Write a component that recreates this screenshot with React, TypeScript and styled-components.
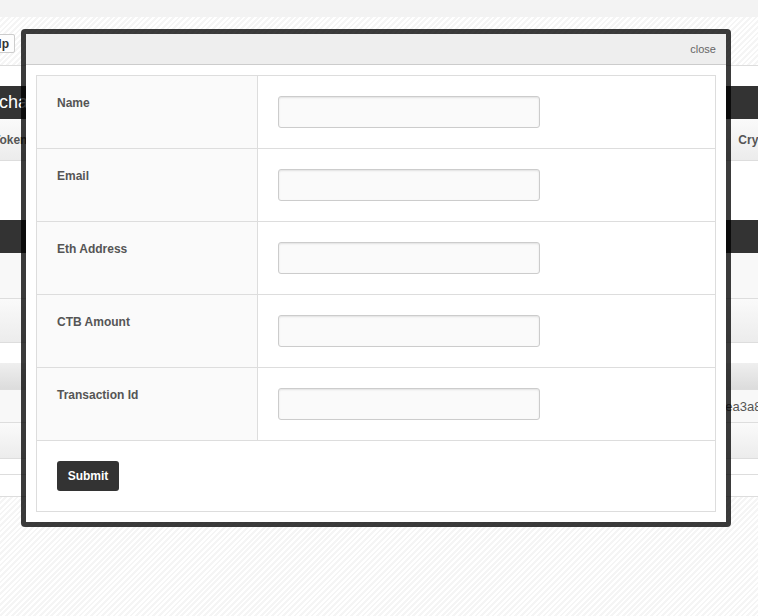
import { FC } from "react";
import styled, { createGlobalStyle, css } from "styled-components";

const hatch = css`
  background-color: #fcfcfc;
  background-image: repeating-linear-gradient(
    -45deg,
    #ffffff 0,
    #ffffff 2px,
    #f5f5f5 2px,
    #f5f5f5 4px
  );
`;

const GlobalStyle = createGlobalStyle`
  html, body {
    margin: 0;
    overflow: hidden;
  }
  body {
    font-family: "Liberation Sans", Arial, sans-serif;
    ${hatch}
  }
`;

const fields = ["Name", "Email", "Eth Address", "CTB Amount", "Transaction Id"];

const App: FC = () => {
  return (
    <>
      <GlobalStyle />
      <Page>
        <TopStrip />
        <Toolbar>
          <ToolButton>Help</ToolButton>
        </Toolbar>
        <Content>
          <SectionBar>Purchase CTB</SectionBar>
          <Row variant="gradient" height={42}>
            <HeadCell shift={-7}>Token</HeadCell>
            <HeadCell shift={0} trail={-19}>
              Crypto
            </HeadCell>
          </Row>
          <Gap height={59} />
          <SectionBar />
          <Row variant="light" height={46} />
          <Row variant="gradient" height={44} />
          <Gap height={20} />
          <Row variant="head" height={27} />
          <Row variant="light" height={33}>
            <span />
            <HashCell>ea3a8c9f2</HashCell>
          </Row>
          <Row variant="gradient" height={36} />
          <Row variant="white" height={16} />
          <Row variant="white" height={22} />
        </Content>
      </Page>

      <Modal>
        <ModalHeader>
          <CloseLink>close</CloseLink>
        </ModalHeader>
        <ModalBody>
          <FormTable>
            {fields.map((label) => (
              <FormRow key={label}>
                <LabelCell>{label}</LabelCell>
                <InputCell>
                  <TextInput type="text" />
                </InputCell>
              </FormRow>
            ))}
            <SubmitRow>
              <SubmitButton type="button">Submit</SubmitButton>
            </SubmitRow>
          </FormTable>
        </ModalBody>
      </Modal>
    </>
  );
};

export default App;

const Page = styled.div`
  width: 100%;
  overflow: hidden;
`;

const TopStrip = styled.div`
  height: 17px;
  background: #f3f3f3;
`;

const Toolbar = styled.div`
  height: 48px;
  padding-top: 17px;
  box-sizing: border-box;
  ${hatch}
`;

const ToolButton = styled.button`
  display: block;
  height: 19px;
  margin-left: -23px;
  padding: 0 5px;
  border: 1px solid #cccccc;
  border-radius: 2px;
  background: #fdfdfd;
  color: #333333;
  font: bold 12px "Liberation Sans", Arial, sans-serif;
`;

const Content = styled.div`
  background: #ffffff;
  border-top: 1px solid #dddddd;
  padding-top: 20px;
`;

const SectionBar = styled.div`
  height: 33px;
  line-height: 33px;
  background: #333333;
  color: #ffffff;
  font-size: 18px;
  text-indent: -29px;
  white-space: nowrap;
`;

const rowBackgrounds = {
  gradient: "linear-gradient(#fafafa, #ececec)",
  light: "#f8f8f8",
  head: "linear-gradient(#efefef, #dcdcdc)",
  white: "#ffffff",
};

const Row = styled.div<{
  variant: keyof typeof rowBackgrounds;
  height: number;
}>`
  display: flex;
  justify-content: space-between;
  align-items: center;
  box-sizing: border-box;
  height: ${(p) => p.height}px;
  background: ${(p) => rowBackgrounds[p.variant]};
  border-bottom: 1px solid #dddddd;
  white-space: nowrap;
`;

const Gap = styled.div<{ height: number }>`
  height: ${(p) => p.height}px;
`;

const HeadCell = styled.span<{ shift: number; trail?: number }>`
  margin-left: ${(p) => p.shift}px;
  margin-right: ${(p) => p.trail ?? 0}px;
  color: #555555;
  font-size: 12px;
  font-weight: bold;
`;

const HashCell = styled.span`
  margin-right: -28px;
  color: #555555;
  font-size: 13px;
`;

const Modal = styled.div`
  position: absolute;
  top: 29px;
  left: 21px;
  width: 710px;
  box-sizing: border-box;
  border: 5px solid rgba(0, 0, 0, 0.77);
  border-radius: 4px;
  background: #ffffff;
  background-clip: padding-box;
`;

const ModalHeader = styled.div`
  display: flex;
  justify-content: flex-end;
  align-items: center;
  height: 30px;
  padding-right: 10px;
  background: #eeeeee;
  border-bottom: 1px solid #cccccc;
`;

const CloseLink = styled.a`
  color: #666666;
  font-size: 11px;
  cursor: pointer;
`;

const ModalBody = styled.div`
  padding: 10px;
`;

const FormTable = styled.div`
  border: 1px solid #dddddd;
`;

const FormRow = styled.div`
  display: grid;
  grid-template-columns: 221px 1fr;
  border-bottom: 1px solid #dddddd;
`;

const LabelCell = styled.div`
  padding: 20px 20px 0;
  background: #fafafa;
  border-right: 1px solid #dddddd;
  color: #555555;
  font-size: 12px;
  font-weight: bold;
`;

const InputCell = styled.div`
  padding: 20px;
`;

const TextInput = styled.input`
  display: block;
  width: 262px;
  height: 32px;
  box-sizing: border-box;
  margin: 0;
  border: 1px solid #cccccc;
  border-radius: 3px;
  background: #fafafa;
  box-shadow: inset 0 1px 2px rgba(0, 0, 0, 0.1);
`;

const SubmitRow = styled.div`
  padding: 20px;
`;

const SubmitButton = styled.button`
  display: block;
  width: 62px;
  height: 30px;
  border: none;
  border-radius: 3px;
  background: #333333;
  color: #ffffff;
  font: bold 12px "Liberation Sans", Arial, sans-serif;
`;
